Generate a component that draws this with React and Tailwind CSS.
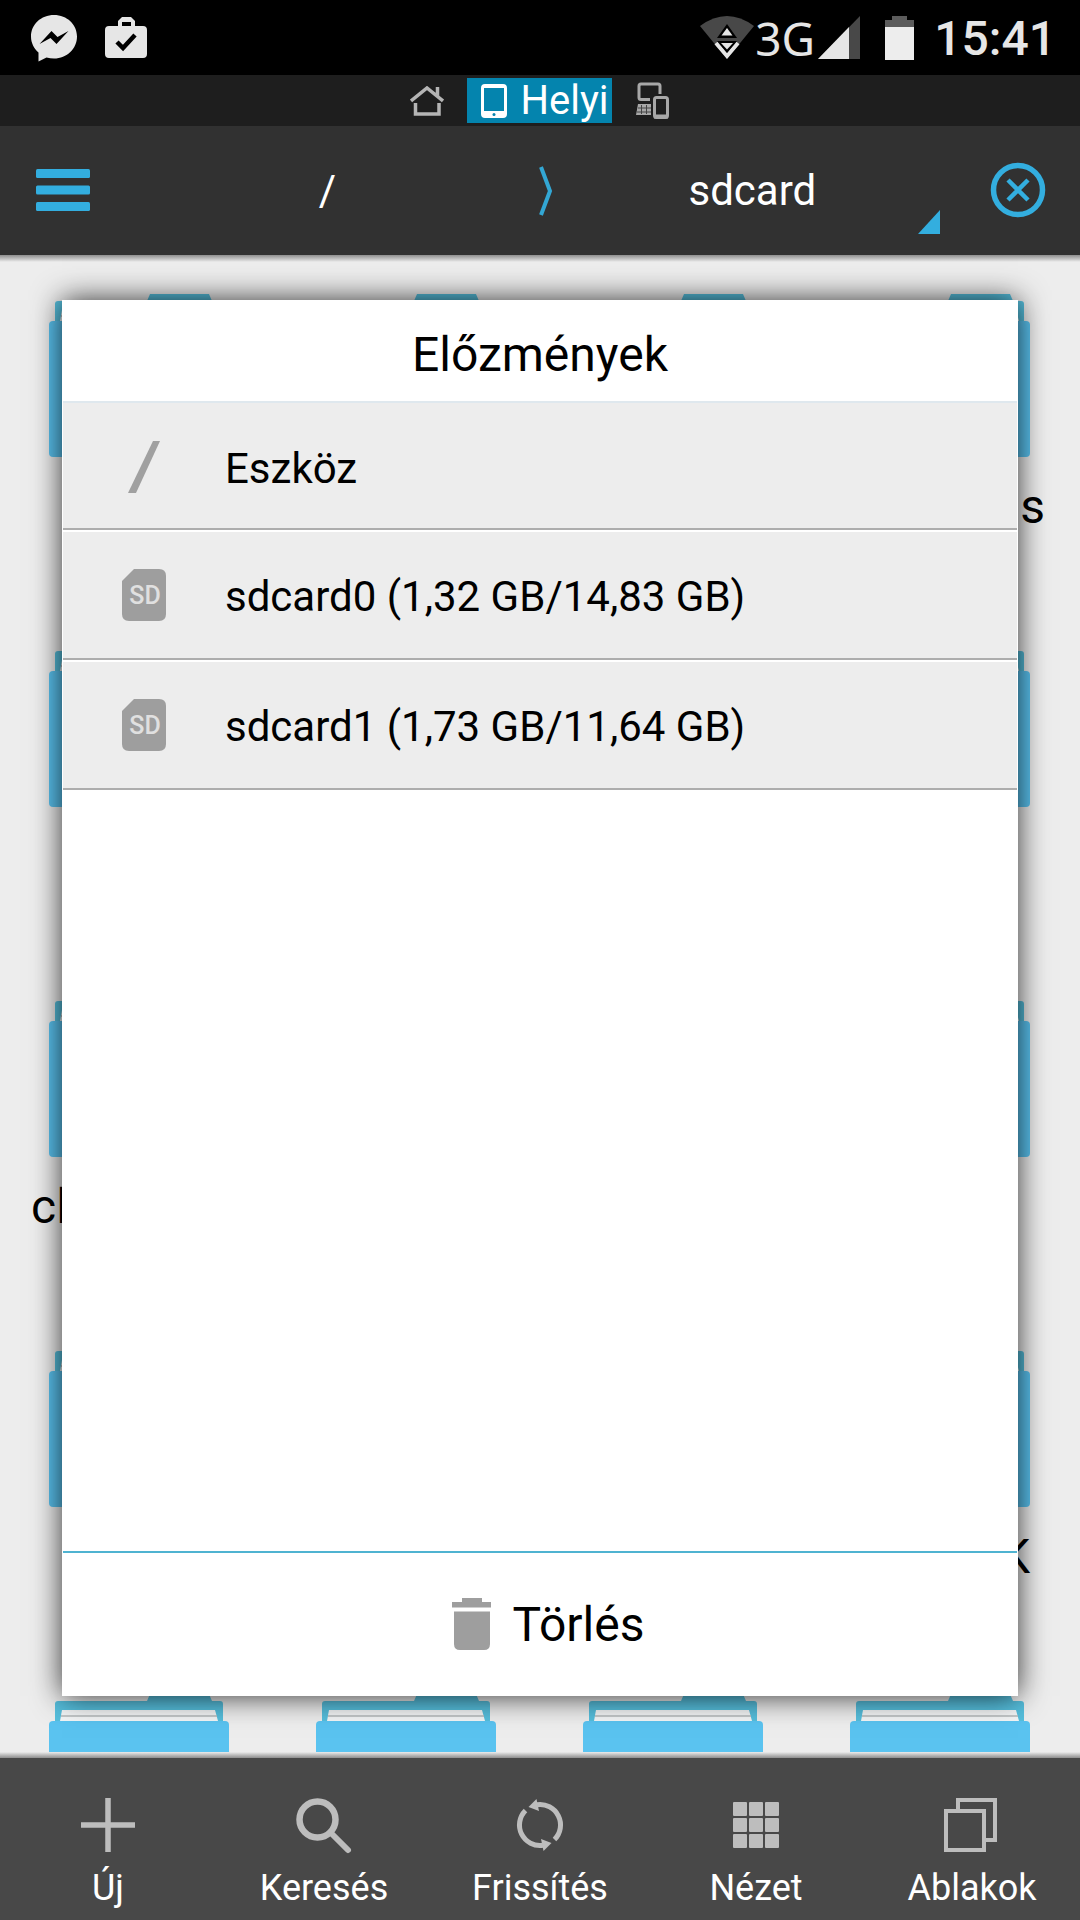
const folderRows = [
  ['', '', '', 's'],
  ['', '', '', ''],
  ['cl', '', '', ''],
  ['', '', '', 'K'],
  ['', '', '', ''],
];

const storages = [
  { name: 'Eszköz', icon: 'root' },
  { name: 'sdcard0 (1,32 GB/14,83 GB)', icon: 'sd' },
  { name: 'sdcard1 (1,73 GB/11,64 GB)', icon: 'sd' },
];

const labelAlign = {
  s: 'self-end pr-[28px]',
  K: 'self-end pr-[43px]',
  cl: 'self-start pl-[26px]',
};

const StatusBar = () => (
  <header className="h-[75px] shrink-0 bg-black flex items-center justify-between pl-[30px] pr-6 text-[#e6e6e6]">
    <div className="flex items-center gap-[27px]">
      <svg width="48" height="48" viewBox="0 0 48 48" fill="#e6e6e6" role="img" aria-label="Messenger">
        <path d="M24 1C11 1 1 10.500 1 22.500C1 29 4 34.500 8.500 38.500V47.500L16.500 43.500C19 44.200 21.500 44.500 24 44.500C37 44.500 47 34.500 47 22.500C47 10.500 37 1 24 1Z" />
        <path d="M9.500 30L21.500 17L27.500 23L38.500 17L26.500 30L20.500 24Z" fill="#000" />
      </svg>
      <svg width="42" height="42" viewBox="0 0 42 42" fill="#e6e6e6" role="img" aria-label="Play">
        <path fillRule="evenodd" d="M13 9V4L17 0H26L30 4V9H38Q42 9 42 13V37Q42 41 38 41H4Q0 41 0 37V13Q0 9 4 9ZM17 9H26V5H17Z" />
        <path d="M12 25L18 31L30 18" fill="none" stroke="#000" strokeWidth="4.500" />
      </svg>
    </div>
    <div className="flex items-center">
      <svg width="54" height="44" viewBox="0 0 54 44">
        <path d="M0 10Q27 -10 54 10L27 43Z" fill="#484848" />
        <path d="M16 27L27 40L38 27" fill="none" stroke="#e6e6e6" strokeWidth="4" />
        <path d="M17 22L27 8L37 22Z" fill="#000" />
        <path d="M21.500 19.500L27 12L32.500 19.500Z" fill="#e6e6e6" />
        <path d="M17 25H37L27 37Z" fill="#000" />
        <path d="M21 27H33L27 33.500Z" fill="#e6e6e6" />
      </svg>
      <span className="ml-px w-[63px] font-['Noto_Sans',sans-serif] text-[46px] leading-[56px]">3G</span>
      <svg width="42" height="43" viewBox="0 0 42 43">
        <path d="M42 0V43H0Z" fill="#484848" />
        <path d="M31 11V43H0Z" fill="#e6e6e6" />
      </svg>
      <svg className="ml-[25px]" width="29" height="44" viewBox="0 0 29 44">
        <path d="M7 0H22V4H29V12H0V4H7Z" fill="#5c5c5c" />
        <rect y="11" width="29" height="33" fill="#ededed" />
      </svg>
      <span className="ml-5 pt-[3px] text-5xl leading-[56px] font-medium">15:41</span>
    </div>
  </header>
);

const Tabs = () => (
  <nav className="h-[51px] shrink-0 bg-[#1e1e1e] flex items-center justify-center gap-[23px]">
    <button aria-label="Kezdőlap">
      <svg width="34" height="30" viewBox="0 0 34 30" fill="none" stroke="#b5b5b5" strokeWidth="3.500">
        <path d="M1 15L17 2L33 15M27.500 10V1" />
        <path d="M5.500 17V28H29V17" />
      </svg>
    </button>
    <button className="h-[45px] bg-[#0484ae] flex items-center gap-[13px] pl-[14px] pr-[3px] text-white text-[40px] leading-[44px]">
      <svg width="26" height="34" viewBox="0 0 26 34">
        <path fillRule="evenodd" fill="#fff" d="M4 0H22Q26 0 26 4V30Q26 34 22 34H4Q0 34 0 30V4Q0 0 4 0ZM3 4V27H23V4Z" />
        <circle cx="13" cy="30.500" r="1.500" fill="#0484ae" />
      </svg>
      Helyi
    </button>
    <button aria-label="Hálózat">
      <svg width="35" height="38" viewBox="0 0 35 38" fill="none" stroke="#a8a8a8" strokeWidth="3">
        <path d="M15 17.500H6Q4 17.500 4 15.500V4Q4 2 6 2H23Q25 2 25 4V12" />
        <path d="M3 22H16V33H1Z" fill="#a8a8a8" stroke="none" />
        <path d="M3 26H16M2 30H16M6.500 23V32M11.500 23V32" stroke="#444" strokeWidth="1" />
        <rect x="19.500" y="15.500" width="13" height="20" rx="2" />
        <path d="M19 34.500H33" strokeWidth="4" />
      </svg>
    </button>
  </nav>
);

const Toolbar = () => (
  <div className="h-[129px] shrink-0 bg-[#313131] flex items-stretch text-white text-[42px] leading-[50px]">
    <button aria-label="Menü" className="w-[124px] pl-9 pb-[2px] flex items-center">
      <svg width="54" height="42" viewBox="0 0 54 42" fill="#33aedf">
        <rect width="54" height="9" rx="1.500" />
        <rect y="16.500" width="54" height="9" rx="1.500" />
        <rect y="33" width="54" height="9" rx="1.500" />
      </svg>
    </button>
    <button className="flex-[21_1_0%]">/</button>
    <svg className="w-7 self-center shrink-0" height="50" viewBox="0 0 28 50" fill="none" stroke="#33a7d4" strokeWidth="4">
      <path d="M10 1L19 25L10 49" />
    </svg>
    <button className="flex-[20_1_0%] relative">
      sdcard
      <svg className="absolute right-[6px] bottom-[21px]" width="22" height="24" viewBox="0 0 22 24" fill="#33aedf">
        <path d="M22 0V24H0Z" />
      </svg>
    </button>
    <button aria-label="Bezárás" className="w-[134px] pl-[44px] pb-[2px] flex items-center">
      <svg width="56" height="56" viewBox="0 0 56 56" fill="none" stroke="#33aedf">
        <circle cx="28" cy="28" r="24.500" strokeWidth="5.500" />
        <path d="M18 18L38 38M38 18L18 38" strokeWidth="4.500" />
      </svg>
    </button>
  </div>
);

const Folder = () => (
  <svg className="shrink-0" width="180" height="164" viewBox="0 0 180 164">
    <path d="M6 30V11Q6 8 9 8H98L101 1H160L163 8H171Q174 8 174 11V30Z" fill="#56bfdd" />
    <path d="M13 17H166L169 28H11Z" fill="#f4f6f7" />
    <path d="M12 23H168" stroke="#b5b8ba" strokeWidth="1.500" />
    <rect y="28" width="180" height="136" rx="4" fill="#5ac3f0" />
  </svg>
);

const StorageIcon = ({ type }) => {
  if (type === 'root') {
    return (
      <svg width="44" height="52" viewBox="0 0 44 52">
        <path d="M31 0H38L14 52H6Z" fill="#a0a0a0" />
      </svg>
    );
  }
  return (
    <svg width="44" height="52" viewBox="0 0 44 52">
      <path d="M12 0H37Q44 0 44 7V45Q44 52 37 52H7Q0 52 0 45V12Z" fill="#9e9e9e" />
      <text x="23" y="35" textAnchor="middle" fontSize="25" fontWeight="500" fill="#e0e0e0">SD</text>
    </svg>
  );
};

const HistoryDialog = () => (
  <section
    role="dialog"
    aria-labelledby="history_title"
    className="absolute inset-x-[62px] top-[45px] bottom-[56px] bg-white flex flex-col text-black shadow-[0_0_28px_rgba(0,0,0,0.8)]"
  >
    <h1 id="history_title" className="h-[101px] shrink-0 pt-2 flex items-center justify-center text-5xl leading-[56px]">
      Előzmények
    </h1>
    <ul className="border-t-2 border-[#dfe8ee] mx-px">
      {storages.map(storage => (
        <li key={storage.name} className="group border-b-2 border-[#adadad]">
          <button className="w-full h-32 group-first:h-[125px] pl-[59px] flex items-center gap-[59px] border-t-2 border-white group-first:border-[#ededed] bg-[#ededed] text-[42px] leading-[50px]">
            <StorageIcon type={storage.icon} />
            <span className="pt-1">{storage.name}</span>
          </button>
        </li>
      ))}
    </ul>
    <button className="mt-auto mx-px h-[145px] shrink-0 pl-4 border-t-2 border-[#4fb3d1] flex items-center justify-center gap-[21px] text-5xl leading-[56px]">
      <svg width="40" height="54" viewBox="0 0 40 54" fill="#9e9e9e">
        <path d="M10 0H30V4H39V9.500H0V4H10Z" />
        <path d="M2 13.500H38V46Q38 52 32 52H8Q2 52 2 46Z" />
      </svg>
      Törlés
    </button>
  </section>
);

const actions = [
  {
    label: 'Új',
    icon: <path d="M27 0V54M0 27H54" strokeWidth="5.500" />,
  },
  {
    label: 'Keresés',
    icon: (
      <>
        <circle cx="20.500" cy="21.500" r="18" strokeWidth="6.500" />
        <path d="M34 35L51 52" strokeWidth="6" strokeLinecap="round" />
      </>
    ),
  },
  {
    label: 'Frissítés',
    icon: (
      <>
        <path d="M12.500 12.500A20.500 20.500 0 0 0 30 47.300M41.500 41.500A20.500 20.500 0 0 0 24 6.700" strokeWidth="5" />
        <path d="M15.500 9L23.500 1L26 13Z" fill="#bdbdbd" stroke="none" />
        <path d="M38.500 45L30.500 53L28 41Z" fill="#bdbdbd" stroke="none" />
      </>
    ),
  },
  {
    label: 'Nézet',
    icon: [0, 1, 2].map(row =>
      [0, 1, 2].map(col => (
        <rect key={`${row}${col}`} x={4 + col * 16} y={4 + row * 16} width="14" height="14" rx="1" fill="#bdbdbd" stroke="none" />
      ))
    ),
  },
  {
    label: 'Ablakok',
    icon: (
      <>
        <path d="M13 12V2H50V42H40" strokeWidth="4" />
        <rect x="1" y="13" width="38" height="39" strokeWidth="4" />
      </>
    ),
  },
];

const BottomBar = () => (
  <footer className="h-[162px] shrink-0 bg-[#484848] grid grid-cols-5 pt-10 text-white">
    {actions.map(action => (
      <button key={action.label} className="flex flex-col items-center gap-[14px] text-4xl leading-[44px]">
        <svg className="shrink-0 overflow-visible" width="54" height="54" viewBox="0 0 54 54" fill="none" stroke="#bdbdbd">
          {action.icon}
        </svg>
        {action.label}
      </button>
    ))}
  </footer>
);

const App = () => {
  return (
    <div className="w-full h-screen flex flex-col bg-[#ededed] font-[Roboto,sans-serif]">
      <StatusBar />
      <Tabs />
      <Toolbar />
      <main className="relative flex-1 min-h-0 overflow-hidden">
        <div className="h-[7px] bg-linear-to-b from-[#8e8e8e] to-[#ededed]" />
        <div className="pl-[5px] pr-[7px] pt-[31px]">
          {folderRows.map((row, i) => (
            <div key={i} className="grid grid-cols-4">
              {row.map((label, j) => (
                <div key={j} className="h-[350px] flex flex-col items-center gap-[22px] text-5xl leading-[56px] text-black">
                  <Folder />
                  {label && <span className={labelAlign[label]}>{label}</span>}
                </div>
              ))}
            </div>
          ))}
        </div>
        <HistoryDialog />
      </main>
      <div className="h-[6px] shrink-0 bg-linear-to-b from-[#ededed] to-[#8e8e8e]" />
      <BottomBar />
    </div>
  );
};

export default App;
